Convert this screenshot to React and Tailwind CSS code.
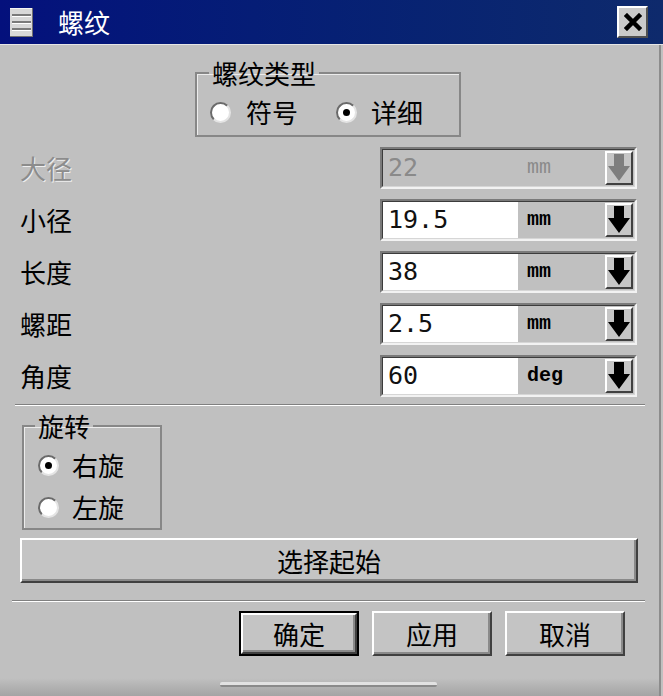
// Thread dialog (螺纹) — classic Win-style gray panel
const CJK = "font-['Noto_Sans_CJK_SC',sans-serif]"

function Radio({ checked }) {
  return (
    <span className="w-[21px] h-[21px] shrink-0 rounded-full bg-white border-2 border-t-[#6a6a6a] border-l-[#6a6a6a] border-r-[#e4e4e4] border-b-[#e4e4e4] flex items-center justify-center">
      {checked && <span className="w-[7px] h-[7px] rounded-full bg-black" />}
    </span>
  )
}

function ArrowButton({ disabled }) {
  return (
    <div className="w-[28px] my-[1px] mr-[1px] bg-[#c6c6c6] border-2 border-t-white border-l-white border-b-[#404040] border-r-[#404040] flex items-center justify-center">
      <svg width="24" height="30" viewBox="0 0 24 30">
        <polygon
          points="7,1 17,1 17,13 23,13 12,28 1,13 7,13"
          fill={disabled ? '#7e7e7e' : '#000'}
        />
      </svg>
    </div>
  )
}

function Field({ value, unit, disabled }) {
  return (
    <div className="h-[42px] border-2 border-t-[#7a7a7a] border-l-[#7a7a7a] border-b-[#f2f2f2] border-r-[#f2f2f2]">
      <div className="h-full border border-t-[#3c3c3c] border-l-[#3c3c3c] border-b-[#d6d6d6] border-r-[#d6d6d6] flex items-stretch">
        <div
          className={
            disabled
              ? "w-[135px] flex items-center pl-[5px] text-[25px] text-[#8a8a8a] font-['DejaVu_Sans_Mono',monospace]"
              : "w-[135px] flex items-center pl-[5px] bg-white text-[25px] text-[#111] font-['DejaVu_Sans_Mono',monospace]"
          }
        >
          {value}
        </div>
        <div
          className={
            disabled
              ? "flex-1 flex items-center pl-[9px] text-[20px] text-[#8a8a8a] font-['Liberation_Mono',monospace]"
              : "flex-1 flex items-center pl-[9px] text-[20px] font-bold text-black font-['Liberation_Mono',monospace]"
          }
        >
          {unit}
        </div>
        <ArrowButton disabled={disabled} />
      </div>
    </div>
  )
}

function Button({ label, isDefault, className = '' }) {
  const inner = (
    <div className="h-full bg-[#c4c4c4] border-2 border-t-white border-l-white border-b-[#404040] border-r-[#404040] shadow-[inset_-2px_-2px_0_#8a8a8a] flex items-center justify-center text-[26px] leading-none">
      {label}
    </div>
  )
  if (isDefault) {
    return <div className={`border-2 border-black ${className}`}>{inner}</div>
  }
  return <div className={className}>{inner}</div>
}

const ROWS = [
  { label: '大径', value: '22', unit: 'mm', disabled: true },
  { label: '小径', value: '19.5', unit: 'mm' },
  { label: '长度', value: '38', unit: 'mm' },
  { label: '螺距', value: '2.5', unit: 'mm' },
  { label: '角度', value: '60', unit: 'deg' },
]

export default function App() {
  return (
    <div className={`w-[663px] h-[696px] bg-[#c0c0c0] flex flex-col overflow-hidden text-black ${CJK}`}>
      {/* Title bar */}
      <div className="h-[44px] shrink-0 bg-linear-to-r from-[#04107c] to-[#0e2a6c] flex items-center pl-[10px] pr-[15px]">
        <svg width="23" height="29" viewBox="0 0 23 29">
          <rect x="0" y="0" width="23" height="29" fill="#d8d8d8" />
          <rect x="0" y="0" width="23" height="1" fill="#f4f4f4" />
          <rect x="22" y="0" width="1" height="29" fill="#707070" />
          <rect x="0" y="28" width="23" height="1" fill="#707070" />
          <rect x="2" y="6" width="19" height="2" fill="#7a7a7a" />
          <rect x="2" y="13" width="19" height="2" fill="#7a7a7a" />
          <rect x="2" y="20" width="19" height="2" fill="#7a7a7a" />
          <rect x="2" y="8" width="19" height="1" fill="#fff" />
          <rect x="2" y="15" width="19" height="1" fill="#fff" />
          <rect x="2" y="22" width="19" height="1" fill="#fff" />
        </svg>
        <span className="ml-[25px] text-white text-[26px] leading-none">螺纹</span>
        <div className="ml-auto w-[31px] h-[32px] bg-[#cacaca] border-2 border-t-white border-l-white border-b-[#505050] border-r-[#505050] flex items-center justify-center">
          <svg width="18" height="18" viewBox="0 0 18 18">
            <path d="M3 3 L15 15 M15 3 L3 15" stroke="#000" strokeWidth="4.5" strokeLinecap="square" />
          </svg>
        </div>
      </div>
      <div className="h-px shrink-0 bg-[#e6e6e6]" />

      {/* Body */}
      <div className="flex-1 flex flex-col w-[661px] border-r-2 border-[#8c8c8c]">
        <fieldset className="mt-[15px] ml-[195px] w-[266px] border-2 border-[#878787] shadow-[inset_1px_1px_0_#ececec] pt-[13px] pb-[10px]">
          <legend className="ml-[12px] px-[3px] text-[26px] leading-[26px]">螺纹类型</legend>
          <div className="flex items-center h-[26px] pl-[13px] text-[26px] leading-none">
            <Radio />
            <span className="ml-[15px]">符号</span>
            <span className="ml-[38px]"><Radio checked /></span>
            <span className="ml-[14px]">详细</span>
          </div>
        </fieldset>

        <div className="mt-[10px] flex flex-col gap-[10px]">
          {ROWS.map(r => (
            <div key={r.label} className="grid grid-cols-[360px_257px] pl-[20px] items-center">
              <span
                className={
                  r.disabled
                    ? 'text-[26px] leading-none text-[#8c8c8c] [text-shadow:1px_1px_0_#eeeeee]'
                    : 'text-[26px] leading-none'
                }
              >
                {r.label}
              </span>
              <Field value={r.value} unit={r.unit} disabled={r.disabled} />
            </div>
          ))}
        </div>

        <div className="mt-[7px] ml-[15px] w-[630px] h-[2px] border-t border-[#808080] border-b border-b-white" />

        <fieldset className="mt-[7px] ml-[22px] w-[140px] border-2 border-[#878787] shadow-[inset_1px_1px_0_#ececec] pt-[13px] pb-[8px]">
          <legend className="ml-[11px] px-[3px] text-[26px] leading-[26px]">旋转</legend>
          <div className="flex flex-col gap-[16px] pl-[14px] text-[26px] leading-none">
            <div className="flex items-center h-[26px]">
              <Radio checked />
              <span className="ml-[13px]">右旋</span>
            </div>
            <div className="flex items-center h-[26px]">
              <Radio />
              <span className="ml-[13px]">左旋</span>
            </div>
          </div>
        </fieldset>

        <Button label="选择起始" className="mt-[8px] ml-[20px] w-[618px] h-[45px]" />

        <div className="mt-[17px] ml-[12px] w-[633px] h-[2px] border-t border-[#808080] border-b border-b-white" />

        <div className="mt-[9px] flex gap-[13px] pl-[239px]">
          <Button label="确定" isDefault className="w-[120px] h-[45px]" />
          <Button label="应用" className="w-[120px] h-[45px]" />
          <Button label="取消" className="w-[120px] h-[45px]" />
        </div>

        <div className="flex-1 flex flex-col justify-end">
          <div className="h-[18px] bg-linear-to-b from-[#c0c0c0] to-[#a4a4a4] flex justify-start">
            <div className="ml-[220px] mt-[4px] w-[217px] h-[5px] bg-[#e2e2e2] border-b-2 border-[#8a8a8a] rounded-[2px]" />
          </div>
        </div>
      </div>
    </div>
  )
}
